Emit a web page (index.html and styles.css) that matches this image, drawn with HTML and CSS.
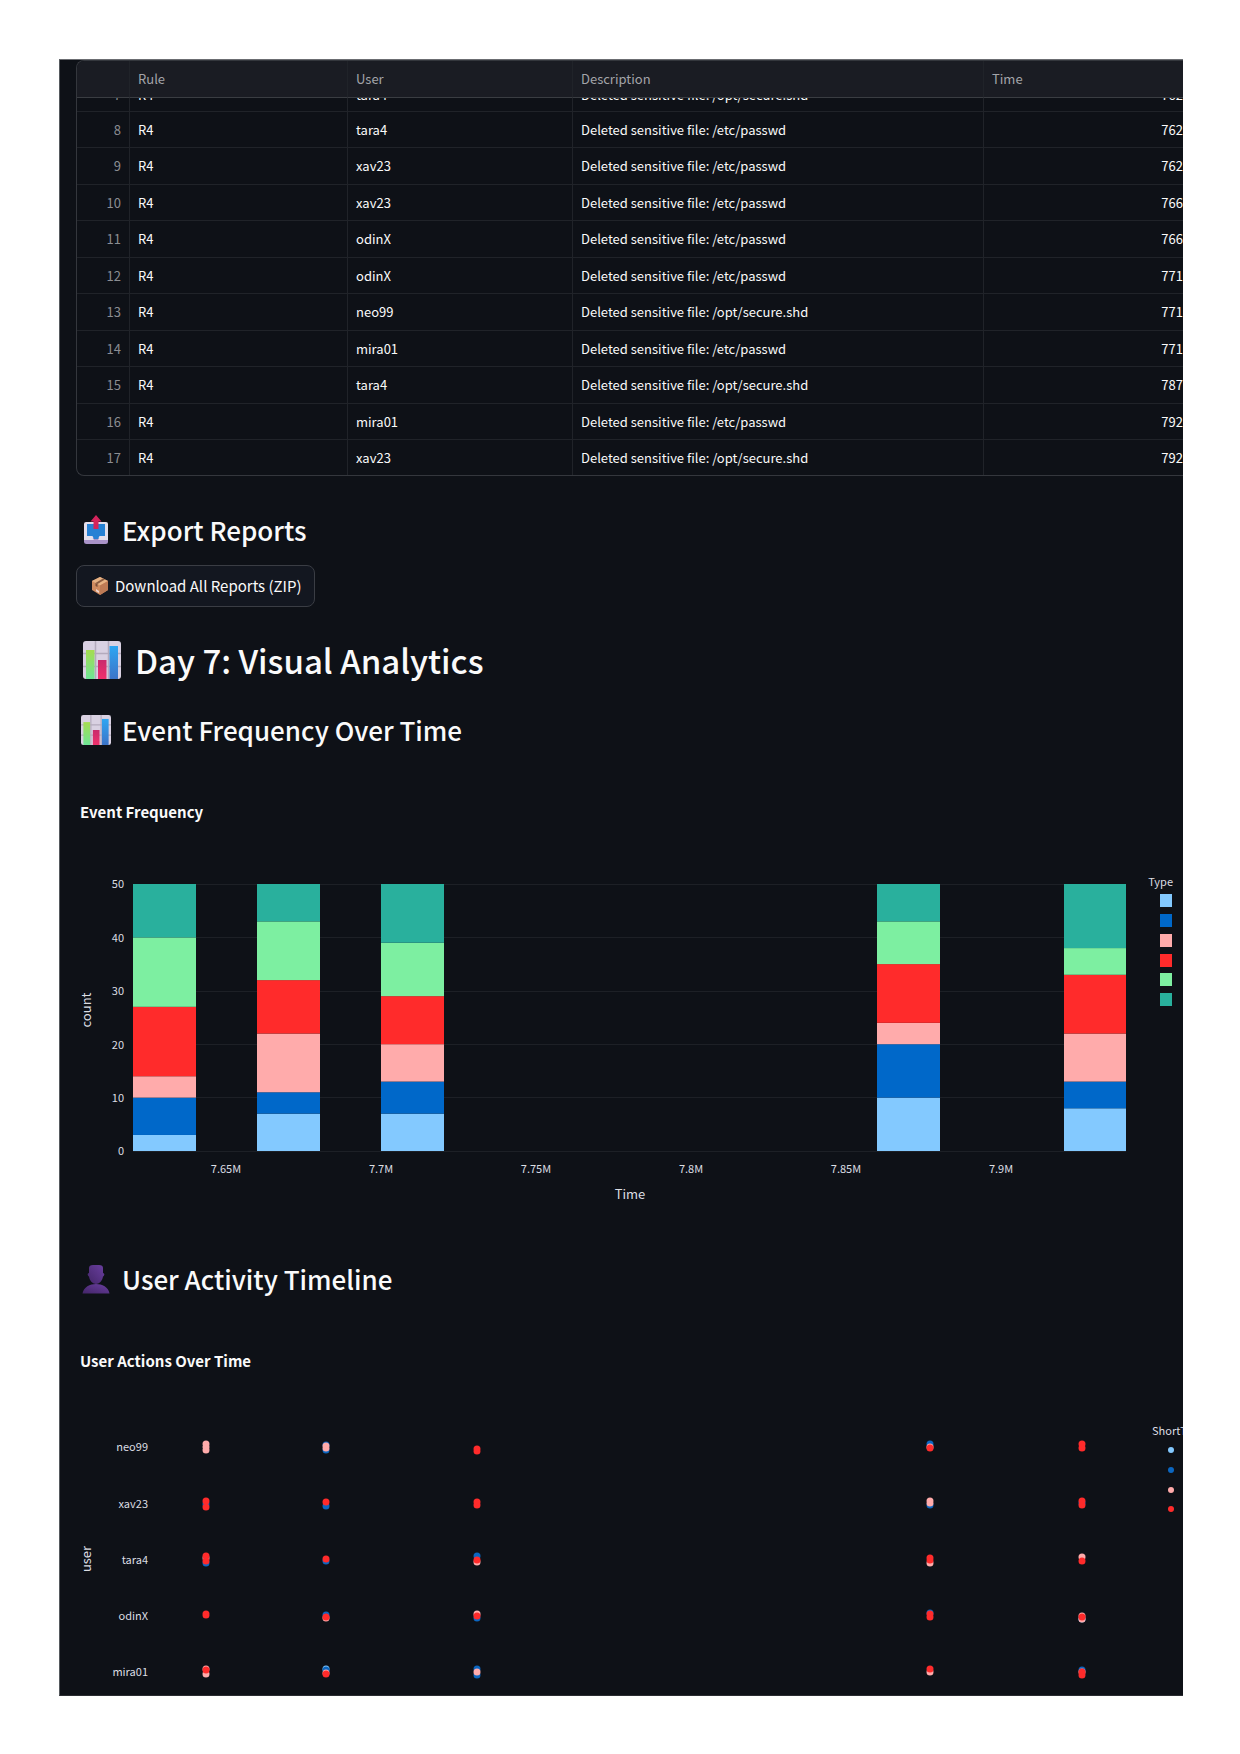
FILE: index.html
```html
<!DOCTYPE html>
<html lang="en">
<head>
<meta charset="utf-8">
<meta name="viewport" content="width=device-width, initial-scale=1">
<title>Day 7: Visual Analytics</title>
<link rel="stylesheet" href="styles.css">
</head>
<body>
<svg class="defs" width="0" height="0" aria-hidden="true">
  <defs>
    <linearGradient id="g-green" x1="0" y1="0" x2="0" y2="1"><stop offset="0" stop-color="#a5dc50"/><stop offset="1" stop-color="#6ee696"/></linearGradient>
    <linearGradient id="g-pink" x1="0" y1="0" x2="0" y2="1"><stop offset="0" stop-color="#c92a6c"/><stop offset="1" stop-color="#f0306c"/></linearGradient>
    <linearGradient id="g-blue" x1="0" y1="0" x2="0" y2="1"><stop offset="0" stop-color="#2ea6f2"/><stop offset="1" stop-color="#3c74c8"/></linearGradient>
    <linearGradient id="g-purple" x1="1" y1="0" x2="0" y2="1"><stop offset="0" stop-color="#6a3fa0"/><stop offset="1" stop-color="#432568"/></linearGradient>
    <symbol id="icon-chart" viewBox="0 0 38 38">
      <rect width="38" height="38" rx="3" fill="#d9d1e2"/>
      <path d="M12.500 0V38M25.500 0V38M0 12.500H38M0 25.500H38" stroke="#b4abbd" stroke-width="1.500"/>
      <rect x="3" y="9" width="8.500" height="29" fill="url(#g-green)"/>
      <rect x="15" y="19" width="8.500" height="19" fill="url(#g-pink)"/>
      <rect x="26.500" y="5" width="8.500" height="33" fill="url(#g-blue)"/>
    </symbol>
  </defs>
</svg>
<main class="sheet">
  <div class="grid-frame">
    <table class="alerts">
      <colgroup><col class="c-index"><col class="c-rule"><col class="c-user"><col class="c-desc"><col></colgroup>
      <thead><tr><th></th><th>Rule</th><th>User</th><th>Description</th><th>Time</th></tr></thead>
      <tbody>
        <tr class="peek"><td><div><span>7</span></div></td><td><div><span>R4</span></div></td><td><div><span>tara4</span></div></td><td><div><span>Deleted sensitive file: /opt/secure.shd</span></div></td><td><div><span>762</span></div></td></tr>
        <tr><td>8</td><td>R4</td><td>tara4</td><td>Deleted sensitive file: /etc/passwd</td><td>762</td></tr>
        <tr><td>9</td><td>R4</td><td>xav23</td><td>Deleted sensitive file: /etc/passwd</td><td>762</td></tr>
        <tr><td>10</td><td>R4</td><td>xav23</td><td>Deleted sensitive file: /etc/passwd</td><td>766</td></tr>
        <tr><td>11</td><td>R4</td><td>odinX</td><td>Deleted sensitive file: /etc/passwd</td><td>766</td></tr>
        <tr><td>12</td><td>R4</td><td>odinX</td><td>Deleted sensitive file: /etc/passwd</td><td>771</td></tr>
        <tr><td>13</td><td>R4</td><td>neo99</td><td>Deleted sensitive file: /opt/secure.shd</td><td>771</td></tr>
        <tr><td>14</td><td>R4</td><td>mira01</td><td>Deleted sensitive file: /etc/passwd</td><td>771</td></tr>
        <tr><td>15</td><td>R4</td><td>tara4</td><td>Deleted sensitive file: /opt/secure.shd</td><td>787</td></tr>
        <tr><td>16</td><td>R4</td><td>mira01</td><td>Deleted sensitive file: /etc/passwd</td><td>792</td></tr>
        <tr><td>17</td><td>R4</td><td>xav23</td><td>Deleted sensitive file: /opt/secure.shd</td><td>792</td></tr>
      </tbody>
    </table>
  </div>

  <section class="export">
    <h2 class="section-title">
      <svg class="icon" viewBox="0 0 30 30" aria-hidden="true">
        <rect x="3" y="7" width="24" height="19" rx="2" fill="#e4dfec"/>
        <path d="M3 23H27V26.500Q27 29 24.500 29H5.500Q3 29 3 26.500Z" fill="#a993c8"/>
        <path d="M3 22H11L13 25H17L19 22H27V25H3Z" fill="#e4dfec"/>
        <path d="M6 9H24V21H18.500L17 24H13L11.500 21H6Z" fill="#2781d4"/>
        <path d="M15 0L20.500 6.500H17.500V14H12.500V6.500H9.500Z" fill="#d4245c"/>
      </svg>
      Export Reports
    </h2>
    <button class="download" type="button">
      <svg class="icon-box" viewBox="0 0 18 18" aria-hidden="true">
        <path d="M9 0L17 4V13L9 18L1 13V4Z" fill="#d08c60"/>
        <path d="M9 0L17 4L9 8.500L1 4Z" fill="#e6b284"/>
        <path d="M9 8.500L17 4V13L9 18Z" fill="#bd7a55"/>
        <path d="M12 1.500L14 2.500L6.500 7L4.500 6Z" fill="#8a5b40"/>
        <path d="M4.500 6L6.500 7V10L4.500 9Z" fill="#7c5039"/>
        <path d="M5 12L8 14V16L5 14.200Z" fill="#f0d5d0"/>
      </svg>
      Download All Reports (ZIP)
    </button>
  </section>

  <h1 class="page-title"><svg class="icon" aria-hidden="true"><use href="#icon-chart"/></svg>Day 7: Visual Analytics</h1>

  <section class="block">
    <h2 class="section-title"><svg class="icon" aria-hidden="true"><use href="#icon-chart"/></svg>Event Frequency Over Time</h2>
    <figure class="chart">
      <figcaption>Event Frequency</figcaption>
      <svg class="plot" viewBox="60 860 1123 360" role="img" aria-label="Stacked histogram of event count over time">
        <g class="gridlines">
          <path d="M133 884.500H1126M133 937.500H1126M133 991.500H1126M133 1044.500H1126M133 1097.500H1126M133 1151.500H1126"/>
        </g>
        <svg x="133" y="884" width="63" height="267" viewBox="0 0 1 50" preserveAspectRatio="none" class="bar">
          <rect class="s1" y="47" width="1" height="3"/><rect class="s2" y="40" width="1" height="7"/><rect class="s3" y="36" width="1" height="4"/><rect class="s4" y="23" width="1" height="13"/><rect class="s5" y="10" width="1" height="13"/><rect class="s6" y="0" width="1" height="10"/>
        </svg>
        <svg x="257" y="884" width="63" height="267" viewBox="0 0 1 50" preserveAspectRatio="none" class="bar">
          <rect class="s1" y="43" width="1" height="7"/><rect class="s2" y="39" width="1" height="4"/><rect class="s3" y="28" width="1" height="11"/><rect class="s4" y="18" width="1" height="10"/><rect class="s5" y="7" width="1" height="11"/><rect class="s6" y="0" width="1" height="7"/>
        </svg>
        <svg x="381" y="884" width="63" height="267" viewBox="0 0 1 50" preserveAspectRatio="none" class="bar">
          <rect class="s1" y="43" width="1" height="7"/><rect class="s2" y="37" width="1" height="6"/><rect class="s3" y="30" width="1" height="7"/><rect class="s4" y="21" width="1" height="9"/><rect class="s5" y="11" width="1" height="10"/><rect class="s6" y="0" width="1" height="11"/>
        </svg>
        <svg x="877" y="884" width="63" height="267" viewBox="0 0 1 50" preserveAspectRatio="none" class="bar">
          <rect class="s1" y="40" width="1" height="10"/><rect class="s2" y="30" width="1" height="10"/><rect class="s3" y="26" width="1" height="4"/><rect class="s4" y="15" width="1" height="11"/><rect class="s5" y="7" width="1" height="8"/><rect class="s6" y="0" width="1" height="7"/>
        </svg>
        <svg x="1064" y="884" width="62" height="267" viewBox="0 0 1 50" preserveAspectRatio="none" class="bar">
          <rect class="s1" y="42" width="1" height="8"/><rect class="s2" y="37" width="1" height="5"/><rect class="s3" y="28" width="1" height="9"/><rect class="s4" y="17" width="1" height="11"/><rect class="s5" y="12" width="1" height="5"/><rect class="s6" y="0" width="1" height="12"/>
        </svg>
        <g class="tick end">
          <text x="124" y="888">50</text><text x="124" y="942">40</text><text x="124" y="995">30</text><text x="124" y="1049">20</text><text x="124" y="1102">10</text><text x="124" y="1155">0</text>
        </g>
        <g class="tick mid">
          <text x="226" y="1173">7.65M</text><text x="381" y="1173">7.7M</text><text x="536" y="1173">7.75M</text><text x="691" y="1173">7.8M</text><text x="846" y="1173">7.85M</text><text x="1001" y="1173">7.9M</text>
        </g>
        <text class="axis mid" x="630" y="1199">Time</text>
        <text class="axis mid" transform="translate(91 1010) rotate(-90)">count</text>
        <text class="legend end" x="1173" y="886">Type</text>
        <rect class="s1" x="1160" y="894" width="12" height="13"/><rect class="s2" x="1160" y="914" width="12" height="13"/><rect class="s3" x="1160" y="934" width="12" height="13"/><rect class="s4" x="1160" y="954" width="12" height="13"/><rect class="s5" x="1160" y="973" width="12" height="13"/><rect class="s6" x="1160" y="993" width="12" height="13"/>
      </svg>
    </figure>
  </section>

  <section class="block">
    <h2 class="section-title">
      <svg class="icon" viewBox="0 0 30 30" aria-hidden="true">
        <path d="M1.500 29.500C2.500 23 9 20 15 20S27.500 23 28.500 29.500Z" fill="url(#g-purple)"/>
        <path d="M8 4Q8 1 12 1H18Q22 1 22 4V9Q24 9.500 23 11.500Q22.500 12.500 22 12.500C21.500 17 18 20 15 20S8.500 17 8 12.500Q7.500 12.500 7 11.500Q6 9.500 8 9Z" fill="url(#g-purple)"/>
      </svg>
      User Activity Timeline
    </h2>
    <figure class="chart">
      <figcaption>User Actions Over Time</figcaption>
      <svg class="plot" viewBox="60 1410 1123 286" role="img" aria-label="User actions by user over time">
        <g class="tick end">
          <text x="148" y="1452">neo99</text><text x="148" y="1509">xav23</text><text x="148" y="1565">tara4</text><text x="148" y="1621">odinX</text><text x="148" y="1677">mira01</text>
        </g>
        <text class="axis mid" transform="translate(91 1560) rotate(-90)">user</text>
        <g class="dots">
          <path class="p3" d="M206 1445v0M206 1448v0M206 1451v0"/>
          <path class="p2" d="M326 1446v0M326 1451v0"/><path class="p3" d="M326 1447v0M326 1449v0"/>
          <path class="p4" d="M477 1450v0M477 1452v0"/>
          <path class="p2" d="M930 1445v0"/><path class="p3" d="M930 1448v0"/><path class="p4" d="M930 1449v0"/>
          <path class="p4" d="M1082 1445v0M1082 1449v0"/>

          <path class="p2" d="M206 1505v0"/><path class="p4" d="M206 1502v0M206 1508v0"/>
          <path class="p2" d="M326 1507v0"/><path class="p4" d="M326 1503v0"/>
          <path class="p4" d="M477 1503v0M477 1506v0"/>
          <path class="p2" d="M930 1506v0"/><path class="p3" d="M930 1502v0M930 1504v0"/>
          <path class="p2" d="M1082 1504v0"/><path class="p4" d="M1082 1502v0M1082 1506v0"/>

          <path class="p2" d="M206 1564v0"/><path class="p3" d="M206 1559v0"/><path class="p4" d="M206 1557v0M206 1562v0"/>
          <path class="p2" d="M326 1562v0"/><path class="p4" d="M326 1560v0"/>
          <path class="p2" d="M477 1557v0"/><path class="p3" d="M477 1563v0"/><path class="p4" d="M477 1561v0"/>
          <path class="p3" d="M930 1564v0"/><path class="p4" d="M930 1559v0M930 1561v0"/>
          <path class="p3" d="M1082 1558v0"/><path class="p4" d="M1082 1562v0"/>

          <path class="p4" d="M206 1615v0M206 1616v0"/>
          <path class="p2" d="M326 1616v0"/><path class="p3" d="M326 1619v0"/><path class="p4" d="M326 1618v0"/>
          <path class="p2" d="M477 1619v0"/><path class="p3" d="M477 1615v0"/><path class="p4" d="M477 1617v0"/>
          <path class="p2" d="M930 1614v0"/><path class="p4" d="M930 1615v0M930 1618v0"/>
          <path class="p1" d="M1082 1620v0"/><path class="p3" d="M1082 1617v0M1082 1620v0"/><path class="p4" d="M1082 1618v0"/>

          <path class="p3" d="M206 1670v0M206 1675v0"/><path class="p4" d="M206 1671v0"/>
          <path class="p1" d="M326 1670v0"/><path class="p2" d="M326 1671v0"/><path class="p3" d="M326 1674v0"/><path class="p4" d="M326 1675v0"/>
          <path class="p2" d="M477 1670v0M477 1676v0"/><path class="p3" d="M477 1673v0"/>
          <path class="p3" d="M930 1673v0"/><path class="p4" d="M930 1670v0"/>
          <path class="p2" d="M1082 1671v0"/><path class="p3" d="M1082 1673v0"/><path class="p4" d="M1082 1673v0M1082 1676v0"/>
        </g>
        <text class="legend" x="1152" y="1436">ShortT</text>
        <g class="dots key">
          <path class="p1" d="M1171 1451v0"/><path class="p2" d="M1171 1471v0"/><path class="p3" d="M1171 1491v0"/><path class="p4" d="M1171 1510v0"/>
        </g>
      </svg>
    </figure>
  </section>
</main>
</body>
</html>
```
FILE: styles.css
```css
* { box-sizing: border-box; }

body {
  margin: 0;
  background: #fff;
  font-family: "Noto Sans CJK JP", sans-serif;
}

.defs { position: absolute; }

.sheet {
  margin: 59px 57px 58px 59px;
  background: #0e1117;
  color: #fafafa;
  border-top: 1px solid #6b6d71;
  border-left: 1px solid #565a5e;
  border-bottom: 1px solid #2a2c31;
  overflow: hidden;
}

/* Alerts grid */
.grid-frame {
  margin-left: 16px;
  border: 1px solid #34373d;
  border-right: 0;
  border-radius: 8px 0 0 8px;
  overflow: hidden;
}

.alerts {
  width: 100%;
  table-layout: fixed;
  border-collapse: separate;
  border-spacing: 0;
  font-size: 13px;
}

.c-index { width: 53px; }
.c-rule { width: 218px; }
.c-user { width: 225px; }
.c-desc { width: 411px; }

.alerts th,
.alerts td {
  height: 36px;
  padding: 0 8px;
  border-bottom: 1px solid #202329;
  border-right: 1px solid #202329;
  font-weight: 400;
  line-height: 20px;
  text-align: left;
  white-space: nowrap;
}

.alerts tbody tr:nth-child(odd) td { height: 37px; }

.alerts th {
  height: 37px;
  background: #1a1c23;
  border-bottom-color: #3a3d42;
  color: #a3a4a9;
}

.alerts td:first-child {
  color: #8b8d92;
  text-align: right;
}

.alerts th:last-child,
.alerts td:last-child { border-right: 0; }

.alerts td:last-child {
  padding-right: 0;
  text-align: right;
}

.alerts tbody tr:last-child td {
  height: 35px;
  border-bottom: 0;
}

/* Row scrolled mostly under the header */
.alerts tbody tr.peek td { height: 14px; }

.peek div {
  display: flex;
  align-items: flex-end;
  height: 13px;
  overflow: hidden;
}

.peek span { line-height: 32px; }
.peek td:first-child div,
.peek td:last-child div { justify-content: flex-end; }

/* Headings */
h1, h2, figcaption, figure { margin: 0; }

.page-title,
.section-title {
  display: flex;
  align-items: center;
  font-weight: 500;
  white-space: nowrap;
}

.section-title {
  gap: 11px;
  height: 40px;
  padding-left: 21px;
  font-size: 26px;
  line-height: 40px;
}

.section-title .icon { width: 30px; height: 30px; }

.page-title {
  gap: 14px;
  height: 52px;
  margin-top: 27px;
  padding-left: 23px;
  font-size: 33px;
  line-height: 52px;
}

.page-title .icon { width: 38px; height: 38px; }

/* Export */
.export { padding-top: 34px; }

.download {
  display: flex;
  align-items: center;
  gap: 6px;
  height: 42px;
  margin: 15px 0 0 16px;
  padding: 0 12px 0 14px;
  border: 1px solid #3a3d44;
  border-radius: 8px;
  background: #131720;
  color: #fafafa;
  font-family: inherit;
  font-size: 15px;
  line-height: 24px;
  white-space: nowrap;
}

.icon-box { width: 18px; height: 18px; }

/* Charts */
.block { padding-top: 24px; }
.block + .block { padding-top: 39px; }

.chart figcaption {
  padding: 50px 0 0 20px;
  font-size: 15px;
  font-weight: 700;
  line-height: 24px;
}

.plot {
  display: block;
  width: 100%;
  height: auto;
  margin-top: 36px;
}

.plot text {
  fill: #dcdee3;
  font-family: "Noto Sans CJK JP", sans-serif;
}

.tick,
.legend { font-size: 11px; }
.axis { font-size: 13px; }
.end { text-anchor: end; }
.mid { text-anchor: middle; }

.gridlines { fill: none; stroke: #1d2026; }

.s1 { fill: #83c9ff; }
.s2 { fill: #0068c9; }
.s3 { fill: #ffabab; }
.s4 { fill: #ff2b2b; }
.s5 { fill: #7defa1; }
.s6 { fill: #29b09d; }

.dots {
  fill: none;
  stroke-width: 7;
  stroke-linecap: round;
}

.key { stroke-width: 6; }

.p1 { stroke: #83c9ff; }
.p2 { stroke: #0b66c0; }
.p3 { stroke: #ffabab; }
.p4 { stroke: #ff2b2b; }
```
